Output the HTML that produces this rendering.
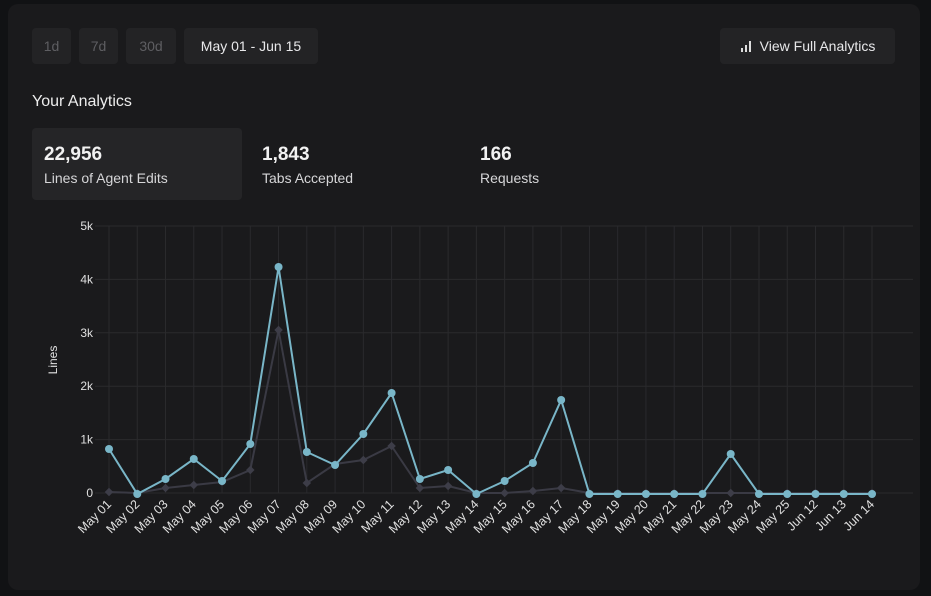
<!DOCTYPE html>
<html><head><meta charset="utf-8"><style>
body{margin:0;width:931px;height:596px;background:#111214;font-family:"Liberation Sans",sans-serif;overflow:hidden;position:relative}
.card{position:absolute;left:8px;top:4px;width:912px;height:586px;background:#1a1a1c;border-radius:10px}
.btn{position:absolute;top:28px;height:36px;background:#232325;border-radius:4px;color:#5e5e62;font-size:14px;line-height:36px;text-align:center}
.on{color:#e8e8ea}
.stat{position:absolute;top:128px;height:72px;width:210px;border-radius:4px}
.stat b{position:absolute;left:12px;top:16px;font-size:19px;color:#f2f2f2}
.stat span{position:absolute;left:12px;top:42px;font-size:14px;color:#d6d6d8}
</style></head><body>
<div class="card"></div>
<div class="btn" style="left:32px;width:39px">1d</div>
<div class="btn" style="left:79px;width:39px">7d</div>
<div class="btn" style="left:126px;width:50px">30d</div>
<div class="btn on" style="left:184px;width:134px">May 01 - Jun 15</div>
<div class="btn on" style="left:720px;width:175px"><svg width="12" height="12" style="vertical-align:-1px;margin-right:8px"><rect x="1" y="8" width="2" height="4" fill="#ddd"/><rect x="5" y="5" width="2" height="7" fill="#ddd"/><rect x="9" y="1" width="2" height="11" fill="#ddd"/></svg>View Full Analytics</div>
<div style="position:absolute;left:32px;top:93px;font-size:16px;color:#ededed">Your Analytics</div>
<div class="stat" style="left:32px;background:#252527"><b>22,956</b><span>Lines of Agent Edits</span></div>
<div class="stat" style="left:250px"><b>1,843</b><span>Tabs Accepted</span></div>
<div class="stat" style="left:468px"><b>166</b><span>Requests</span></div>
<svg id="c" width="931" height="596" style="position:absolute;left:0;top:0" font-family="Liberation Sans, sans-serif"></svg>
<script>
var s=document.getElementById('c'),h='';
var labels=["May 01","May 02","May 03","May 04","May 05","May 06","May 07","May 08","May 09","May 10","May 11","May 12","May 13","May 14","May 15","May 16","May 17","May 18","May 19","May 20","May 21","May 22","May 23","May 24","May 25","Jun 12","Jun 13","Jun 14"];
var b=[449,494,479,459,481,444,267,452,465,434,393,479,470,494,481,463,400,494,494,494,494,494,454,494,494,494,494,494];
var g=[492,493,488,485,482,470,330,483,464,460,446,488,486,493,493,491,488,493,493,493,493,493,493,493,493,493,493,493];
function X(i){return 109+i*28.26}
for(var k=0;k<=5;k++){var y=493-k*53.4;h+='<line x1="95" x2="913" y1="'+y+'" y2="'+y+'" stroke="#2a2a2d"/>';h+='<text x="93" y="'+(y+4)+'" fill="#e0e0e0" font-size="12" text-anchor="end">'+(k?k+'k':'0')+'</text>';}
for(var i=0;i<28;i++){var x=X(i);h+='<line x1="'+x+'" x2="'+x+'" y1="226" y2="493" stroke="#2a2a2d"/>';h+='<text transform="translate('+(x+3)+',505) rotate(-45)" fill="#e0e0e0" font-size="12.5" text-anchor="end">'+labels[i]+'</text>';}
h+='<text transform="translate(57,360) rotate(-90)" fill="#e0e0e0" font-size="12" text-anchor="middle">Lines</text>';
var pg=g.map(function(v,i){return X(i)+','+v}).join(' ');
h+='<polyline points="'+pg+'" fill="none" stroke="#3a3a44" stroke-width="2"/>';
g.forEach(function(v,i){h+='<rect x="'+(X(i)-3)+'" y="'+(v-3)+'" width="6" height="6" transform="rotate(45 '+X(i)+' '+v+')" fill="#3d3d48"/>'});
var pb=b.map(function(v,i){return X(i)+','+v}).join(' ');
h+='<polyline points="'+pb+'" fill="none" stroke="#79b6c8" stroke-width="2"/>';
b.forEach(function(v,i){h+='<circle cx="'+X(i)+'" cy="'+v+'" r="4" fill="#79b6c8"/>'});
s.innerHTML=h;
</script>
</body></html>
